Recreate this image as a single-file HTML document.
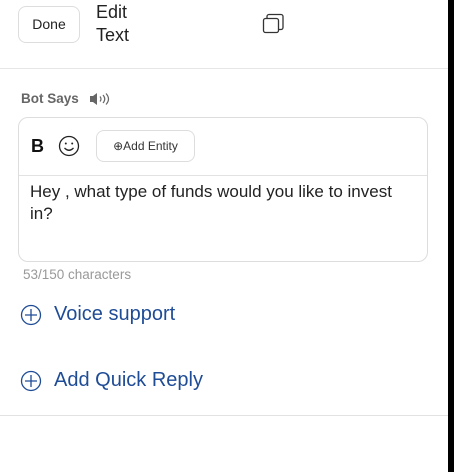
<!DOCTYPE html>
<html><head><style>
body{margin:0;width:454px;height:472px;background:#fff;position:relative;overflow:hidden;font-family:"Liberation Sans",Arial,sans-serif}
.a{position:absolute}
</style></head><body>
<div class="a" style="right:0;top:0;width:6px;height:472px;background:#000"></div>
<div class="a" style="left:18px;top:6px;width:60px;height:35px;border:1px solid #ddd;border-radius:8px;font-size:14px;line-height:35px;text-align:center;color:#222">Done</div>
<div class="a" style="left:96px;top:1px;font-size:18px;line-height:23px;color:#222">Edit<br>Text</div>
<svg class="a" style="left:262px;top:13px" width="24" height="22" viewBox="0 0 24 22"><rect x="1.5" y="5.5" width="15" height="14" rx="2" fill="none" stroke="#333" stroke-width="1.3"/><path d="M5 5.5V3.5a2 2 0 0 1 2-2h12a2 2 0 0 1 2 2v11a2 2 0 0 1-2 2h-2.5" fill="none" stroke="#333" stroke-width="1.3"/></svg>
<div class="a" style="left:0;top:68px;width:448px;height:1px;background:#e6e6e6"></div>
<div class="a" style="left:21px;top:91px;font-size:13.5px;font-weight:bold;color:#666">Bot Says</div>
<svg class="a" style="left:89px;top:92px" width="22" height="14" viewBox="0 0 22 14"><path d="M1 4h3l4-3v12l-4-3H1z" fill="#666"/><path d="M11 4.5q2 2.5 0 5M14 3q3.5 4 0 8M17 1.5q5 5.5 0 11" fill="none" stroke="#666" stroke-width="1.2"/></svg>
<div class="a" style="left:18px;top:117px;width:408px;height:143px;border:1px solid #ddd;border-radius:10px"></div>
<div class="a" style="left:19px;top:175px;width:408px;height:1px;background:#e2e2e2"></div>
<div class="a" style="left:31px;top:136px;font-size:18px;font-weight:bold;color:#111">B</div>
<svg class="a" style="left:58px;top:135px" width="22" height="22" viewBox="0 0 22 22"><circle cx="11" cy="11" r="9.5" fill="none" stroke="#222" stroke-width="1.3"/><circle cx="7.8" cy="8.5" r="1" fill="#222"/><circle cx="14.2" cy="8.5" r="1" fill="#222"/><path d="M6.5 13q4.5 4.5 9 0" fill="none" stroke="#222" stroke-width="1.3"/></svg>
<div class="a" style="left:96px;top:130px;width:97px;height:30px;border:1px solid #ddd;border-radius:8px;font-size:12px;line-height:30px;text-align:center;color:#333">⊕Add Entity</div>
<div class="a" style="left:30px;top:181px;width:375px;font-size:17px;line-height:22px;color:#222">Hey , what type of funds would you like to invest in?</div>
<div class="a" style="left:23px;top:267px;font-size:13.5px;color:#999">53/150 characters</div>
<svg class="a" style="left:20px;top:304px" width="22" height="22" viewBox="0 0 22 22"><circle cx="11" cy="11" r="9.5" fill="none" stroke="#1f4c96" stroke-width="1.3"/><path d="M11 5v12M5 11h12" stroke="#1f4c96" stroke-width="1.3"/></svg>
<div class="a" style="left:54px;top:303px;font-size:20px;color:#1f4c96">Voice support</div>
<svg class="a" style="left:20px;top:370px" width="22" height="22" viewBox="0 0 22 22"><circle cx="11" cy="11" r="9.5" fill="none" stroke="#1f4c96" stroke-width="1.3"/><path d="M11 5v12M5 11h12" stroke="#1f4c96" stroke-width="1.3"/></svg>
<div class="a" style="left:54px;top:369px;font-size:20px;color:#1f4c96">Add Quick Reply</div>
<div class="a" style="left:0;top:415px;width:448px;height:1px;background:#e2e2e2"></div>
</body></html>
